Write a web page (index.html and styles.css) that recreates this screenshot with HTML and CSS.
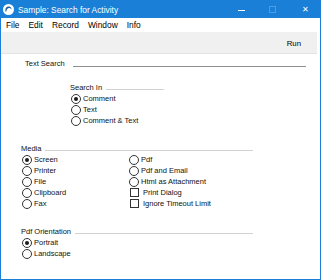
FILE: index.html
```html
<html>
<head>
	<title>Sample: Search for Activity</title>
	<meta charset="utf-8">
	<link rel="stylesheet" href="styles.css">
</head>
<body>
<div class="window">
	<div class="titlebar">
		<svg class="app_icon" width="11" height="11" viewBox="0 0 11 11">
			<circle cx="5.5" cy="5.5" r="5.5" fill="#ffffff"/>
			<path d="M3 8.2 C1.6 6 2.6 3 5.2 2.6 C7.4 2.3 8.8 4 8.4 5.8 C7.9 4.4 6.6 3.7 5.3 4.2 C4 4.7 3.4 6.3 3 8.2 Z" fill="#1f5f9e"/>
		</svg>
		<span class="title_text">Sample: Search for Activity</span>
		<span class="ctl ctl_min"></span>
		<span class="ctl ctl_max"></span>
		<span class="ctl ctl_close">&#x2715;</span>
	</div>

	<div class="menubar">
		<span class="menu_item">File</span>
		<span class="menu_item">Edit</span>
		<span class="menu_item">Record</span>
		<span class="menu_item">Window</span>
		<span class="menu_item">Info</span>
	</div>

	<div class="toolbar">
		<span class="run_btn">Run</span>
	</div>

	<div class="content">
		<div class="text_search">
			<span class="field_label">Text Search</span>
			<span class="field_line"></span>
		</div>

		<div class="group group_search_in">
			<div class="group_head"><span>Search In</span><span class="group_rule"></span></div>
			<div class="opt"><span class="radio on"></span>Comment</div>
			<div class="opt"><span class="radio"></span>Text</div>
			<div class="opt"><span class="radio"></span>Comment &amp; Text</div>
		</div>

		<div class="group group_media">
			<div class="group_head"><span>Media</span><span class="group_rule"></span></div>
			<div class="cols">
				<div class="col col_left">
					<div class="opt"><span class="radio on"></span>Screen</div>
					<div class="opt"><span class="radio"></span>Printer</div>
					<div class="opt"><span class="radio"></span>File</div>
					<div class="opt"><span class="radio"></span>Clipboard</div>
					<div class="opt"><span class="radio"></span>Fax</div>
				</div>
				<div class="col">
					<div class="opt"><span class="radio"></span>Pdf</div>
					<div class="opt"><span class="radio"></span>Pdf and Email</div>
					<div class="opt"><span class="radio"></span>Html as Attachment</div>
					<div class="opt"><span class="check"></span>Print Dialog</div>
					<div class="opt"><span class="check"></span>Ignore Timeout Limit</div>
				</div>
			</div>
		</div>

		<div class="group group_orient">
			<div class="group_head"><span>Pdf Orientation</span><span class="group_rule"></span></div>
			<div class="opt"><span class="radio on"></span>Portrait</div>
			<div class="opt"><span class="radio"></span>Landscape</div>
		</div>
	</div>
</div>
</body>
</html>
```

FILE: styles.css
```css
body {
	margin: 0;
	font-family: "Liberation Sans", Arial, sans-serif;
	color: #000000;
}

.window {
	width: 321px;
	height: 280px;
	box-sizing: border-box;
	border: 1px solid #1a7fd6;
	border-top: none;
	background: #ffffff;
	overflow: hidden;
}

/* title bar */
.titlebar {
	height: 18px;
	background: #1a7fd6;
	display: flex;
	align-items: center;
	color: #ffffff;
	margin: 0 -1px;
}

.app_icon {
	margin-left: 3px;
	margin-top: 1px;
}

.title_text {
	margin-left: 4px;
	font-size: 8.4px;
	margin-top: 1px;
}

.ctl {
	display: block;
}

.ctl_min {
	margin-left: auto;
	width: 7px;
	height: 1px;
	background: #ffffff;
	margin-top: 2px;
}

.ctl_max {
	width: 5px;
	height: 5px;
	border: 1px solid #4a9ee4;
	margin-left: 24px;
	margin-top: 1px;
}

.ctl_close {
	font-size: 8px;
	margin-left: 26px;
	margin-right: 12px;
	margin-top: 1px;
}

/* menu */
.menubar {
	height: 14px;
	display: flex;
	align-items: center;
	font-size: 8.4px;
	padding-left: 5px;
}

.menu_item {
	margin-right: 9px;
}

/* toolbar */
.toolbar {
	height: 21px;
	background: #f0f0f0;
	border-bottom: 1px solid #e4e4e4;
	margin-right: 3px;
	display: flex;
	align-items: center;
	justify-content: flex-end;
	font-size: 7.8px;
}

.run_btn {
	margin-right: 16px;
	margin-top: 1px;
}

/* form */
.content {
	font-size: 7.5px;
	padding-top: 4px;
	color: #111111;
}

.text_search {
	display: flex;
	align-items: center;
	height: 11px;
	padding-left: 24px;
	margin-right: 14px;
}

.field_line {
	flex: 1;
	height: 1px;
	background: #8e8e8e;
	margin-left: 8px;
	margin-top: 6px;
}

.group_head {
	display: flex;
	align-items: center;
	height: 12px;
}

.group_rule {
	flex: 1;
	height: 1px;
	background: #d2d2d2;
	margin-left: 4px;
	margin-top: 5px;
}

.group_search_in {
	margin-top: 12px;
	margin-left: 69px;
	width: 94px;
}

.group_media {
	margin-top: 16px;
	margin-left: 20px;
	width: 232px;
}

.group_orient {
	margin-top: 16px;
	margin-left: 20px;
	width: 232px;
}

.opt {
	display: flex;
	align-items: center;
	height: 11px;
	white-space: nowrap;
}

.radio {
	width: 8px;
	height: 8px;
	border: 1px solid #333333;
	border-radius: 50%;
	margin-left: 1px;
	margin-right: 2px;
	position: relative;
	background: #ffffff;
}

.radio.on::after {
	content: "";
	position: absolute;
	left: 2px;
	top: 2px;
	width: 4px;
	height: 4px;
	border-radius: 50%;
	background: #1b1b1b;
}

.check {
	width: 7px;
	height: 7px;
	border: 1px solid #333333;
	margin-left: 2px;
	margin-right: 4px;
	background: #ffffff;
}

.cols {
	display: flex;
}

.col_left {
	width: 107px;
}
```
